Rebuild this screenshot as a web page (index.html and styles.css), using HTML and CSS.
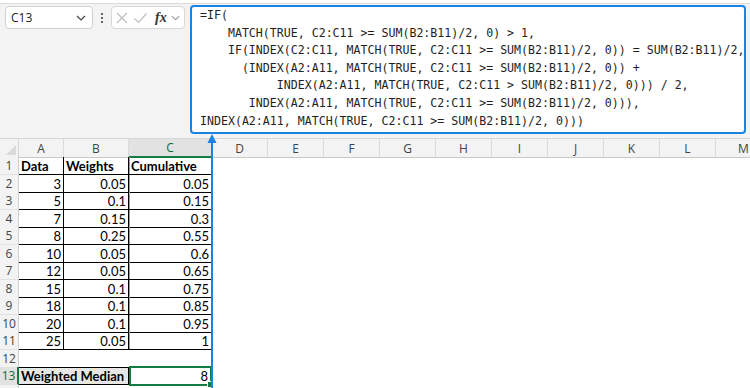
FILE: index.html
```html
<!DOCTYPE html>
<html>
<head>
<meta charset="utf-8">
<link rel="stylesheet" href="styles.css">
</head>
<body>
<div class="app">
  <div class="strip"></div>
  <div class="topbar">
    <div class="namebox">
      <span class="ref">C13</span>
      <svg class="chev" width="10" height="6" viewBox="0 0 10 6"><path d="M1 1l4 4 4-4" fill="none" stroke="#444" stroke-width="1.2"/></svg>
    </div>
    <div class="dots">
      <svg width="4" height="12" viewBox="0 0 4 12"><circle cx="2" cy="2" r="1.1" fill="#444"/><circle cx="2" cy="6" r="1.1" fill="#444"/><circle cx="2" cy="10" r="1.1" fill="#444"/></svg>
    </div>
    <div class="fxbox">
      <svg width="14" height="14" viewBox="0 0 14 14"><path d="M2 2l10 10M12 2L2 12" stroke="#bdbdbd" stroke-width="1.2" fill="none"/></svg>
      <svg width="15" height="14" viewBox="0 0 15 14"><path d="M1.5 7.5l4 4 8-9" stroke="#bdbdbd" stroke-width="1.2" fill="none"/></svg>
      <span class="fx">fx</span>
      <svg class="chev" width="9" height="6" viewBox="0 0 10 6"><path d="M1 1l4 4 4-4" fill="none" stroke="#666" stroke-width="1.1"/></svg>
    </div>
    <div class="formula"><pre>=IF(
    MATCH(TRUE, C2:C11 &gt;= SUM(B2:B11)/2, 0) &gt; 1,
    IF(INDEX(C2:C11, MATCH(TRUE, C2:C11 &gt;= SUM(B2:B11)/2, 0)) = SUM(B2:B11)/2,
      (INDEX(A2:A11, MATCH(TRUE, C2:C11 &gt;= SUM(B2:B11)/2, 0)) +
           INDEX(A2:A11, MATCH(TRUE, C2:C11 &gt; SUM(B2:B11)/2, 0))) / 2,
       INDEX(A2:A11, MATCH(TRUE, C2:C11 &gt;= SUM(B2:B11)/2, 0))),
INDEX(A2:A11, MATCH(TRUE, C2:C11 &gt;= SUM(B2:B11)/2, 0)))</pre></div>
  </div>

  <div class="sheet">
    <div class="hrow">
      <div class="corner"><svg width="10" height="10" viewBox="0 0 10 10"><path d="M10 0V10H0Z" fill="#d9d9d9"/></svg></div>
      <div class="ch">A</div><div class="ch">B</div><div class="ch sel">C</div><div class="ch">D</div><div class="ch">E</div><div class="ch">F</div><div class="ch">G</div><div class="ch">H</div><div class="ch">I</div><div class="ch">J</div><div class="ch">K</div><div class="ch">L</div><div class="ch">M</div>
    </div>

    <div class="r"><div class="rh">1</div><div class="c t b">Data</div><div class="c t b">Weights</div><div class="c t b cc">Cumulative</div></div>
    <div class="r"><div class="rh">2</div><div class="c t n">3</div><div class="c t n">0.05</div><div class="c t n cc">0.05</div></div>
    <div class="r"><div class="rh">3</div><div class="c t n">5</div><div class="c t n">0.1</div><div class="c t n cc">0.15</div></div>
    <div class="r"><div class="rh">4</div><div class="c t n">7</div><div class="c t n">0.15</div><div class="c t n cc">0.3</div></div>
    <div class="r"><div class="rh">5</div><div class="c t n">8</div><div class="c t n">0.25</div><div class="c t n cc">0.55</div></div>
    <div class="r"><div class="rh">6</div><div class="c t n">10</div><div class="c t n">0.05</div><div class="c t n cc">0.6</div></div>
    <div class="r"><div class="rh">7</div><div class="c t n">12</div><div class="c t n">0.05</div><div class="c t n cc">0.65</div></div>
    <div class="r"><div class="rh">8</div><div class="c t n">15</div><div class="c t n">0.1</div><div class="c t n cc">0.75</div></div>
    <div class="r"><div class="rh">9</div><div class="c t n">18</div><div class="c t n">0.1</div><div class="c t n cc">0.85</div></div>
    <div class="r"><div class="rh">10</div><div class="c t n">20</div><div class="c t n">0.1</div><div class="c t n cc">0.95</div></div>
    <div class="r"><div class="rh">11</div><div class="c t n">25</div><div class="c t n">0.05</div><div class="c t n cc">1</div></div>
    <div class="r"><div class="rh">12</div></div>
    <div class="r"><div class="rh selr">13</div><div class="c merged b">Weighted Median</div><div class="c n active">8<span class="handle"></span></div></div>
    <div class="r"><div class="rh"></div></div>

    <svg class="arrow" width="12" height="260" viewBox="0 0 12 260"><path d="M6 6V260" stroke="#1a82e2" stroke-width="2"/><path d="M6 0L10.5 9H1.5Z" fill="#1a82e2"/></svg>
  </div>
</div>
</body>
</html>
```

FILE: styles.css
```css
html, body {
  margin: 0;
  padding: 0;
  background: #ffffff;
}

.app {
  width: 750px;
  height: 388px;
  overflow: hidden;
  position: relative;
  font-family: "Lato", "Liberation Sans", sans-serif;
}

.strip {
  height: 3px;
  background: #ffffff;
}

.topbar {
  height: 136px;
  box-sizing: border-box;
  background: #f3f3f3;
  border-top: 1px solid #dcdcdc;
  border-bottom: 1px solid #d6d6d6;
  display: flex;
  align-items: flex-start;
  padding: 1px 0 0 5px;
}

.namebox {
  margin-top: 1px;
  width: 88px;
  height: 23px;
  box-sizing: border-box;
  background: #ffffff;
  border: 1px solid #d0d0d0;
  border-radius: 4px;
  display: flex;
  align-items: center;
  justify-content: space-between;
  padding: 0 6px 0 5px;
  font-family: "Open Sans", "Noto Sans", sans-serif;
  font-size: 12px;
  color: #222;
}

.dots {
  width: 18px;
  height: 25px;
  display: flex;
  align-items: center;
  justify-content: center;
}

.fxbox {
  margin-top: 1px;
  width: 74px;
  height: 23px;
  box-sizing: border-box;
  background: #ffffff;
  border: 1px solid #d8d8d8;
  border-radius: 4px;
  display: flex;
  align-items: center;
  gap: 4px;
  padding: 0 3px 0 3px;
}

.fx {
  font-family: "Liberation Serif", serif;
  font-style: italic;
  font-weight: bold;
  font-size: 14px;
  color: #333;
  margin-left: 3px;
  line-height: 1;
}

.formula {
  margin-left: 5px;
  width: 556px;
  height: 129px;
  box-sizing: border-box;
  background: #ffffff;
  border: 2px solid #1a82e2;
  border-radius: 4px;
  padding: 0 0 0 8px;
  overflow: hidden;
}

.formula pre {
  margin: 0;
  font-family: "DejaVu Sans Mono", "Liberation Mono", monospace;
  font-size: 11.6px;
  line-height: 17.6px;
  color: #1e1e1e;
}

.sheet {
  position: relative;
}

.hrow {
  display: grid;
  grid-template-columns: 19px 45px 65px 83px repeat(10, 56px);
  height: 18px;
  background: #f3f3f3;
}

.corner {
  box-sizing: border-box;
  border-right: 1px solid #d6d6d6;
  border-bottom: 1px solid #c8c8c8;
  display: flex;
  align-items: flex-end;
  justify-content: flex-end;
  padding: 0 2px 2px 0;
}

.ch {
  box-sizing: border-box;
  border-right: 1px solid #dadada;
  border-bottom: 1px solid #c8c8c8;
  display: flex;
  align-items: center;
  justify-content: center;
  font-family: "Open Sans", "Noto Sans", sans-serif;
  font-size: 12px;
  color: #444;
}

.ch.sel {
  background: #e2e2e2;
  border-bottom: 2px solid #107c41;
  color: #0e6b38;
}

.r {
  display: grid;
  grid-template-columns: 19px 45px 65px 83px;
  height: 17.5px;
}

.rh {
  box-sizing: border-box;
  background: #f3f3f3;
  border-right: 1px solid #d0d0d0;
  border-bottom: 1px solid #e2e2e2;
  display: flex;
  align-items: center;
  justify-content: center;
  font-family: "Open Sans", "Noto Sans", sans-serif;
  font-size: 12px;
  color: #444;
}

.rh.selr {
  background: #e2e2e2;
  border-right: 2px solid #107c41;
  color: #0e6b38;
}

.c {
  box-sizing: border-box;
  display: flex;
  align-items: flex-end;
  padding: 0 2px 0 2px;
  font-size: 13px;
  line-height: 16px;
  color: #000;
  white-space: nowrap;
  position: relative;
}

.t {
  border-right: 1px solid #000;
  border-bottom: 1px solid #000;
}

.cc {
  box-shadow: inset 1px 0 0 #9c9c9c;
}

.b {
  font-weight: bold;
}

.n {
  justify-content: flex-end;
}

.merged {
  grid-column: span 2;
  background: #e7e6e6;
  border-top: 1px solid #000;
  border-right: 1px solid #000;
  border-bottom: 1px solid #000;
}

.active {
  border: 2px solid #107c41;
  margin: -1px 0 -1px 0;
}

.handle {
  position: absolute;
  right: -4px;
  bottom: -4px;
  width: 5px;
  height: 5px;
  background: #107c41;
  border: 1px solid #fff;
}

.arrow {
  position: absolute;
  left: 206px;
  top: -5px;
  z-index: 5;
}
```
